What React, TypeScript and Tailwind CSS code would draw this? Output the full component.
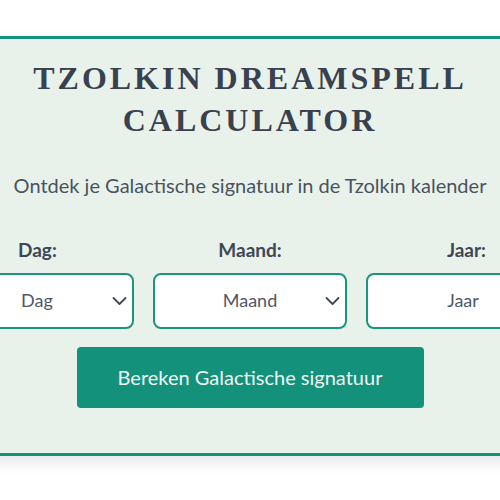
const selects = [
  { label: 'Dag:', placeholder: 'Dag', align: 'text-left pl-[78px]', chevron: true },
  { label: 'Maand:', placeholder: 'Maand', align: 'text-center', chevron: true },
  { label: 'Jaar:', placeholder: 'Jaar', align: 'text-right pr-[74px]', chevron: false },
];

const Chevron = () => (
  <svg width="15" height="9" viewBox="0 0 15 9" fill="none" className="absolute right-[5px] top-1/2 -translate-y-1/2">
    <path d="M1.5 1.5l6 6 6-6" stroke="#3f4854" strokeWidth="1.8" strokeLinecap="round" strokeLinejoin="round" />
  </svg>
);

export default function App() {
  return (
    <main className="w-[500px] h-[500px] bg-white overflow-hidden pt-[36px] font-['Lato',sans-serif]">
      <section className="w-[622px] -ml-[61px] bg-[#e8f2eb] border-y-[3px] border-[#16917c] shadow-[0_6px_14px_rgba(0,0,0,0.10)] pt-[18px] pb-[45px] flex flex-col items-center">
        <h1 className="font-['Liberation_Serif',serif] font-bold text-[32px] leading-[42px] tracking-[3px] text-[#39414e] text-center w-[490px]">
          TZOLKIN DREAMSPELL CALCULATOR
        </h1>
        <p className="mt-[29px] text-[20px] text-[#4a5260] text-center">
          Ontdek je Galactische signatuur in de Tzolkin kalender
        </p>
        <div className="mt-[36px] w-[620px] grid grid-cols-3 gap-x-[19px]">
          {selects.map((s) => (
            <article key={s.label} className="flex flex-col">
              <span className={`text-[19px] font-bold text-[#3f4754] mb-[8px] ${s.align}`}>{s.label}</span>
              <div className="relative h-[56px] bg-white border-2 border-[#1b957f] rounded-[8px] flex items-center justify-center">
                <span className="text-[18px] text-[#505866]">{s.placeholder}</span>
                {s.chevron && <Chevron />}
              </div>
            </article>
          ))}
        </div>
        <button
          type="button"
          className="mt-[18px] w-[347px] h-[61px] bg-[#13917b] rounded-[4px] text-[20px] text-[#eef7f3]"
        >
          Bereken Galactische signatuur
        </button>
      </section>
    </main>
  );
}
